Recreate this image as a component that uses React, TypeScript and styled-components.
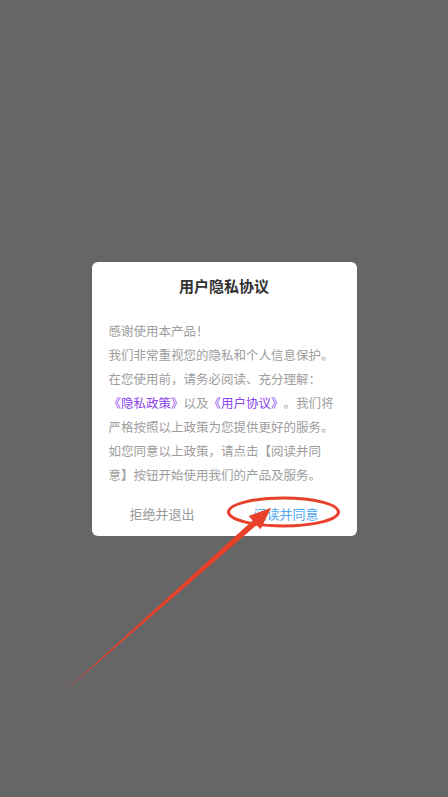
import React from "react";
import styled, { createGlobalStyle } from "styled-components";

const GlobalStyle = createGlobalStyle`
  html, body {
    margin: 0;
    padding: 0;
    background: #666666;
  }
  * { box-sizing: border-box; }
`;

const Screen = styled.div`
  position: relative;
  width: 100%;
  height: 100vh;
  background: #666666;
  display: flex;
  align-items: center;
  justify-content: center;
  font-family: "Noto Sans CJK SC", "Noto Sans", sans-serif;
  overflow: hidden;
`;

const Dialog = styled.div`
  width: 265px;
  height: 274px;
  background: #ffffff;
  border-radius: 6px;
  display: flex;
  flex-direction: column;
`;

const Title = styled.div`
  padding: 14px 17px 0;
  line-height: 20px;
  font-size: 15px;
  font-weight: 700;
  color: #333333;
  text-align: center;
`;

const Body = styled.p`
  margin: 23px 0 0;
  padding: 0 17px;
  font-size: 12.5px;
  line-height: 24px;
  color: #9d9d9d;
  line-break: strict;
  text-spacing-trim: space-all;
`;

const Link = styled.span`
  color: #8a44ee;
`;

const Footer = styled.div`
  margin-top: auto;
  height: 44px;
  display: flex;
  align-items: center;
  justify-content: center;
  gap: 59px;
`;

const Button = styled.button<{ $primary?: boolean }>`
  border: none;
  background: transparent;
  padding: 0;
  font-family: inherit;
  font-size: 13px;
  line-height: 20px;
  color: ${(p) => (p.$primary ? "#52a8f2" : "#9b9b9b")};
  cursor: pointer;
`;

const Annotation = styled.svg`
  position: absolute;
  left: 0;
  top: 0;
  width: 100%;
  height: 100%;
  pointer-events: none;
`;

export default function App() {
  const tail = { x: 64, y: 692 };
  const tip = { x: 271, y: 508 };
  const dx = tip.x - tail.x;
  const dy = tip.y - tail.y;
  const len = Math.hypot(dx, dy);
  const ux = dx / len;
  const uy = dy / len;
  const nx = -uy;
  const ny = ux;
  const headLen = 22;
  const headHalf = 9;
  const shaftHalf = 3;
  const bx = tip.x - ux * headLen;
  const by = tip.y - uy * headLen;
  const pts = [
    [tail.x, tail.y],
    [bx + nx * shaftHalf, by + ny * shaftHalf],
    [bx + nx * headHalf, by + ny * headHalf],
    [tip.x, tip.y],
    [bx - nx * headHalf, by - ny * headHalf],
    [bx - nx * shaftHalf, by - ny * shaftHalf],
  ]
    .map((p) => `${p[0].toFixed(1)},${p[1].toFixed(1)}`)
    .join(" ");

  return (
    <>
      <GlobalStyle />
      <Screen>
        <Dialog>
          <Title>用户隐私协议</Title>
          <Body>
            感谢使用本产品！
            <br />
            我们非常重视您的隐私和个人信息保护。在您使用前，请务必阅读、充分理解：
            <Link>《隐私政策》</Link>以及<Link>《用户协议》</Link>
            。我们将严格按照以上政策为您提供更好的服务。如您同意以上政策，请点击【阅读并同意】按钮开始使用我们的产品及服务。
          </Body>
          <Footer>
            <Button>拒绝并退出</Button>
            <Button $primary>阅读并同意</Button>
          </Footer>
        </Dialog>
        <Annotation viewBox="0 0 448 797" preserveAspectRatio="none">
          <ellipse cx="283.5" cy="512" rx="55" ry="14" fill="none" stroke="#e8412b" strokeWidth="3" />
          <polygon points={pts} fill="#e8412b" />
        </Annotation>
      </Screen>
    </>
  );
}
